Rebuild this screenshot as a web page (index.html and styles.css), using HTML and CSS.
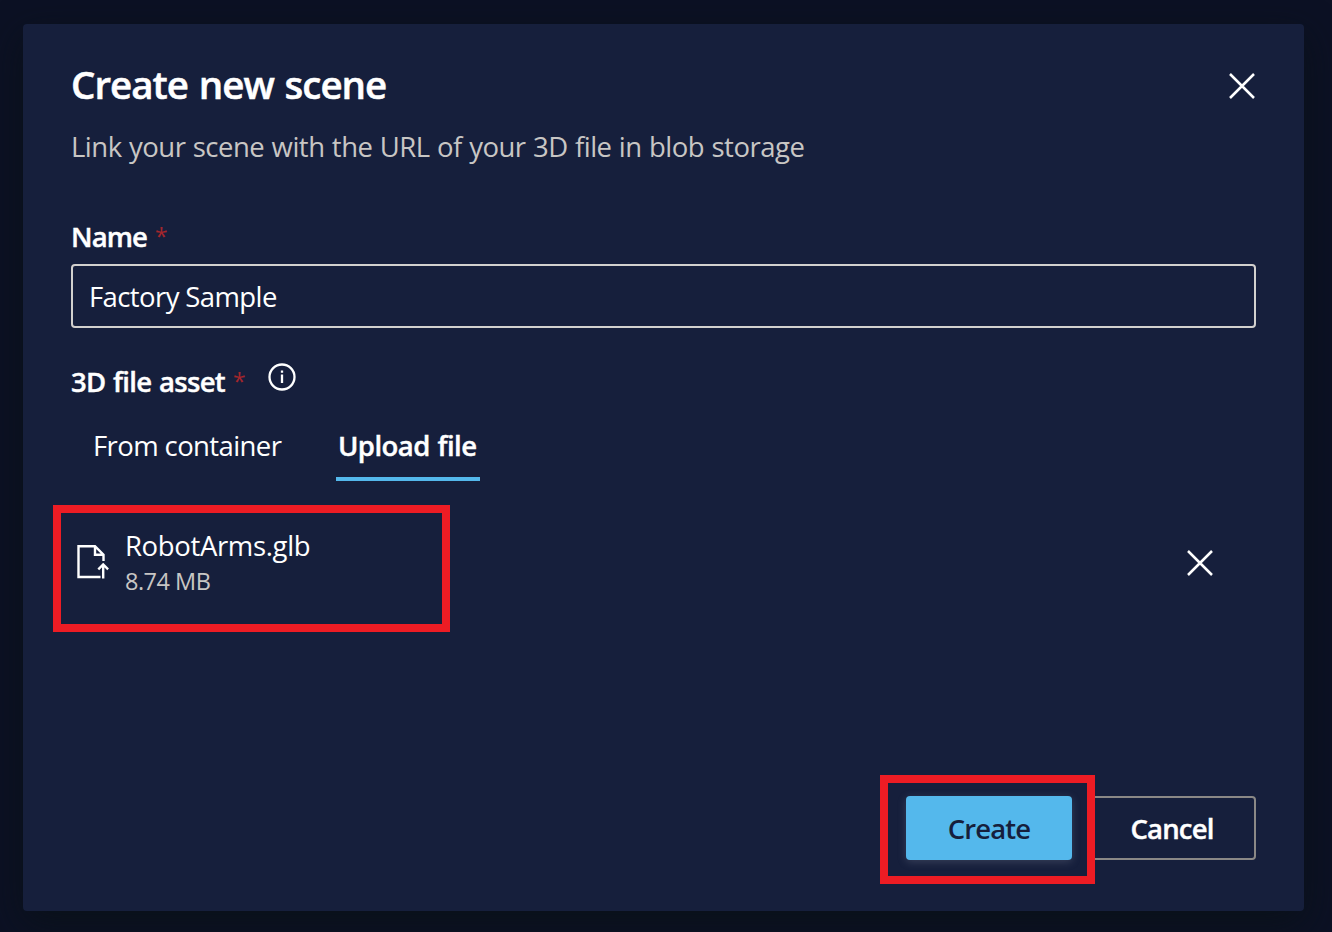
FILE: index.html
```html
<!DOCTYPE html>
<html lang="en">
<head>
<meta charset="utf-8">
<title>Create new scene</title>
<link rel="stylesheet" href="styles.css">
</head>
<body>
<main class="dialog" role="dialog">
  <header class="header">
    <h1 class="title">Create new scene</h1>
    <button class="icon-button" aria-label="Close"><svg class="cross" viewBox="0 0 26 26"><path d="M1 1 25 25M25 1 1 25"/></svg></button>
  </header>
  <p class="subtitle">Link your scene with the URL of your 3D file in blob storage</p>
  <label class="label"><span class="name-label">Name</span><span class="required">*</span></label>
  <div class="field">Factory Sample</div>
  <div class="label"><span class="asset-label">3D file asset</span><span class="required">*</span>
    <svg class="info" viewBox="0 0 28 28"><circle cx="14" cy="14" r="12.5"/><path d="M14 11.500V20M14 7.500V9.700"/></svg>
  </div>
  <nav class="tabs">
    <a class="tab">From container</a>
    <a class="tab active">Upload file</a>
  </nav>
  <section class="file">
    <svg class="file-icon" viewBox="0 0 32 34"><path d="M23.500 32H1.500V1.200H18L26.500 9.700V16M18 1.200V9.700H26.500M26.200 33.500V20M21.300 24.300 26.200 19.400 31.100 24.300"/></svg>
    <div class="file-text">
      <div class="file-name">RobotArms.glb</div>
      <div class="file-size">8.74 MB</div>
    </div>
    <button class="icon-button" aria-label="Remove"><svg class="cross" viewBox="0 0 26 26"><path d="M1 1 25 25M25 1 1 25"/></svg></button>
    <div class="mark mark-file"></div>
  </section>
  <footer class="actions">
    <button class="button primary">Create</button>
    <button class="button">Cancel</button>
    <div class="mark mark-create"></div>
  </footer>
</main>
</body>
</html>
```
FILE: styles.css
```css
* { box-sizing: border-box; }
body {
  margin: 0;
  width: 1332px;
  height: 932px;
  padding: 24px 28px 21px 23px;
  background: #0c1124;
  color: #fff;
  font: 27.5px/36px "Open Sans", "Noto Sans", sans-serif;
  overflow: hidden;
}
.dialog {
  display: flex;
  flex-direction: column;
  width: 1281px;
  height: 887px;
  padding: 34px 48px 51px;
  background: #161f3c;
  border-radius: 4px;
  box-shadow: 0 12px 36px rgba(10, 18, 22, 0.75);
}
.header { display: flex; justify-content: space-between; height: 52px; }
.title {
  margin: 0;
  font-size: 38.5px;
  line-height: 52px;
  font-weight: 600;
  letter-spacing: -1px;
  word-spacing: 1.8px;
  -webkit-text-stroke: 0.5px #fff;
}
.icon-button { width: 28px; height: 28px; padding: 1px; border: 0; background: none; }
.header .icon-button { margin-top: 14px; }
.cross { display: block; width: 26px; height: 26px; fill: none; stroke: #fff; stroke-width: 2.5; }
.subtitle { margin: 19px 0 54px; color: #c8c6c4; letter-spacing: -0.5px; word-spacing: 0.7px; }
.label { display: flex; height: 36px; font-weight: 600; white-space: nowrap; }
.name-label { width: 76px; letter-spacing: -0.9px; -webkit-text-stroke: 0.4px #fff; }
.asset-label { width: 154px; letter-spacing: -0.7px; word-spacing: 1.2px; -webkit-text-stroke: 0.4px #fff; }
.required {
  width: 12px;
  margin: -1px 0 0 8px;
  color: #a4262c;
  font-size: 23px;
  font-weight: 400;
}
.field {
  height: 64px;
  margin: 9px 0 36px;
  padding: 13px 16px;
  border: 2px solid #d2d0ce;
  border-radius: 4px;
  letter-spacing: -0.6px;
}
.info { width: 28px; height: 28px; margin: -1px 0 0 23px; fill: none; stroke: #fff; stroke-width: 2.3; }
.tabs { display: flex; margin-top: 28px; height: 53px; }
.tab { height: 53px; width: 188px; margin: 0 55px 0 22px; letter-spacing: -0.6px; white-space: nowrap; }
.tab.active {
  width: 144px;
  margin: 0;
  padding-left: 2px;
  border-bottom: 4px solid #54b8ec;
  font-weight: 600;
  letter-spacing: -0.55px;
  word-spacing: 1.2px;
  -webkit-text-stroke: 0.4px #fff;
}
.file { position: relative; display: flex; height: 127px; margin-top: 24px; padding: 23px 42px 0 6px; }
.file-icon { width: 32px; height: 34px; margin-top: 17px; fill: none; stroke: #fff; stroke-width: 2.4; }
.file-text { flex: 1; margin-left: 16px; letter-spacing: -0.35px; }
.file-size { color: #c8c6c4; font-size: 23.5px; line-height: 34px; letter-spacing: -0.5px; }
.file .icon-button { margin-top: 21px; }
.mark { position: absolute; border: 8px solid #ed1c24; }
.mark-file { left: -18px; top: 0; width: 397px; height: 127px; }
.actions { position: relative; display: flex; justify-content: flex-end; gap: 16px; margin-top: auto; }
.button {
  width: 168px;
  height: 64px;
  padding: 2px 0 0;
  border: 2px solid #8a8886;
  border-radius: 4px;
  background: none;
  color: #fff;
  font: inherit;
  font-weight: 600;
  letter-spacing: -0.85px;
  -webkit-text-stroke: 0.4px #fff;
}
.button.primary {
  width: 166px;
  border: 0;
  background: #54b8ec;
  color: #161f3c;
  -webkit-text-stroke: 0;
  font-weight: 550;
  box-shadow: 0 2px 8px rgba(160, 165, 180, 0.25);
}
.mark-create { right: 161px; top: -21px; width: 215px; height: 109px; }
```
